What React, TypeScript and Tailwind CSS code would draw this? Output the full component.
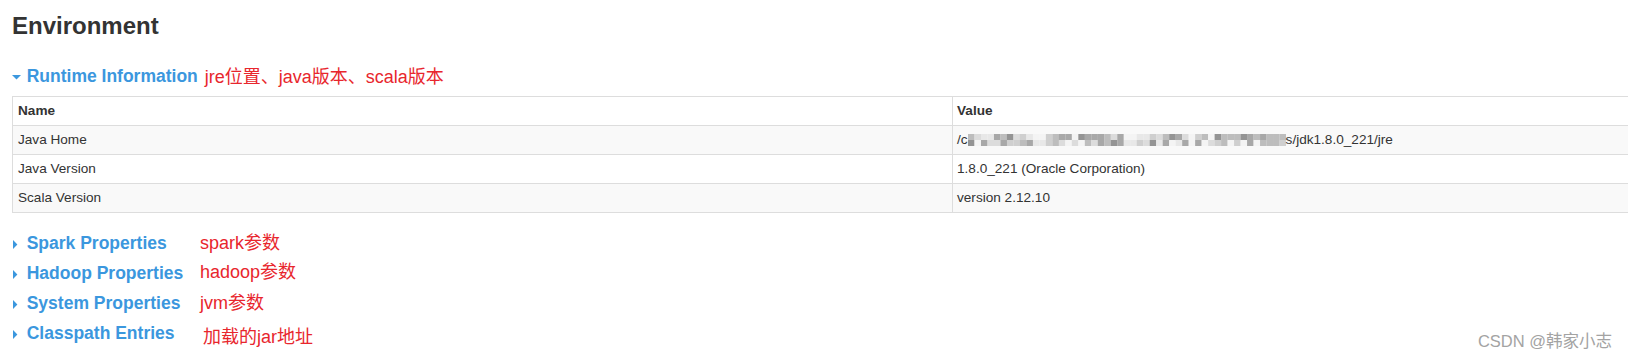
import React from "react";

const BLUE = "text-[#3b97de]";
const RED = "text-[#e8262d]";

const Mosaic = () => {
  const cols = 49;
  let seed = 11;
  const rand = () => {
    seed = (seed * 9301 + 49297) % 233280;
    return seed / 233280;
  };
  const gaps = new Set([10, 11, 24, 25, 34]);
  const shades = ["#f4f4f4", "#e8e8e8", "#dcdcdc", "#cfcfcf", "#bdbdbd", "#a8a8a8", "#949494"];
  const cells: { x: number; y: number; fill: string }[] = [];
  for (let c = 0; c < cols; c++) {
    for (let r = 0; r < 2; r++) {
      const v = rand();
      let idx = Math.floor(v * shades.length);
      if (gaps.has(c)) idx = r === 0 ? 0 : Math.min(idx, 1);
      if (c > 36 && r === 0 && v > 0.4) idx = Math.max(idx, 4);
      cells.push({ x: c * 6.5, y: r * 6, fill: shades[idx] });
    }
  }
  return (
    <svg width="318" height="12" viewBox="0 0 318.5 12" className="inline-block align-[-1px]">
      {cells.map((cell, i) => (
        <rect key={i} x={cell.x} y={cell.y} width="6.6" height="6.1" fill={cell.fill} />
      ))}
    </svg>
  );
};

const CaretDown = () => (
  <svg width="9" height="5" viewBox="0 0 9 5" className="mt-[2px]">
    <polygon points="0,0 9,0 4.5,4.6" fill="#3b97de" />
  </svg>
);

const CaretRight = () => (
  <svg width="5" height="9" viewBox="0 0 5 9" className="ml-[1px] mt-[2px]">
    <polygon points="0,0 4.4,4.5 0,9" fill="#3b97de" />
  </svg>
);

const rows = [
  { name: "Java Home", value: "home" },
  { name: "Java Version", value: "1.8.0_221 (Oracle Corporation)" },
  { name: "Scala Version", value: "version 2.12.10" },
];

const sections = [
  { title: "Spark Properties", note: "spark参数", shift: "" },
  { title: "Hadoop Properties", note: "hadoop参数", shift: "-translate-y-[1px]" },
  { title: "System Properties", note: "jvm参数", shift: "" },
  { title: "Classpath Entries", note: "加载的jar地址", shift: "translate-y-[4px] ml-[3px]" },
];

export default function App() {
  return (
    <div className="relative h-[358px] w-full overflow-hidden bg-white pl-[12px] font-['Liberation_Sans','Noto_Sans_CJK_SC',sans-serif] text-[#333]">
      <h3 className="mt-[14px] text-[24px] font-bold leading-[24px] text-[#333]">Environment</h3>

      <div className="mt-[26px] flex h-[24px] items-center">
        <span className="flex w-[14.7px] items-center">
          <CaretDown />
        </span>
        <span className={`text-[17.5px] font-bold leading-[24px] ${BLUE}`}>Runtime Information</span>
        <span className={`ml-[7px] text-[18px] leading-[24px] translate-y-[1px] ${RED}`}>
          jre位置、java版本、scala版本
        </span>
      </div>

      <div className="mt-[8px] border-b border-l border-[#ddd] text-[13.6px] leading-[16px]">
        <div className="grid grid-cols-[939px_1fr] border-t border-[#ddd] bg-white font-bold">
          <div className="flex h-[28px] items-center px-[5px]">Name</div>
          <div className="flex h-[28px] items-center border-l border-[#ddd] px-[4px]">Value</div>
        </div>
        {rows.map((row, i) => (
          <div
            key={row.name}
            className={`grid grid-cols-[939px_1fr] border-t border-[#ddd] ${i % 2 === 0 ? "bg-[#f9f9f9]" : "bg-white"}`}
          >
            <div className="flex h-[28px] items-center px-[5px]">{row.name}</div>
            <div className="flex h-[28px] items-center border-l border-[#ddd] px-[4px]">
              {row.value === "home" ? (
                <span className="flex items-center">
                  /c
                  <Mosaic />
                  s/jdk1.8.0_221/jre
                </span>
              ) : (
                row.value
              )}
            </div>
          </div>
        ))}
      </div>

      <div className="mt-[15px] flex flex-col">
        {sections.map((s) => (
          <div key={s.title} className="flex h-[30px] items-center">
            <div className="flex w-[188px] items-center">
              <span className="flex w-[14.7px] items-center">
                <CaretRight />
              </span>
              <span className={`text-[17.5px] font-bold leading-[24px] ${BLUE}`}>{s.title}</span>
            </div>
            <span className={`text-[18px] leading-[24px] ${RED} ${s.shift}`}>{s.note}</span>
          </div>
        ))}
      </div>

      <div className="absolute bottom-[7px] right-[16px] text-[16.5px] leading-[20px] text-[#a3a3a3]">
        CSDN @韩家小志
      </div>
    </div>
  );
}
